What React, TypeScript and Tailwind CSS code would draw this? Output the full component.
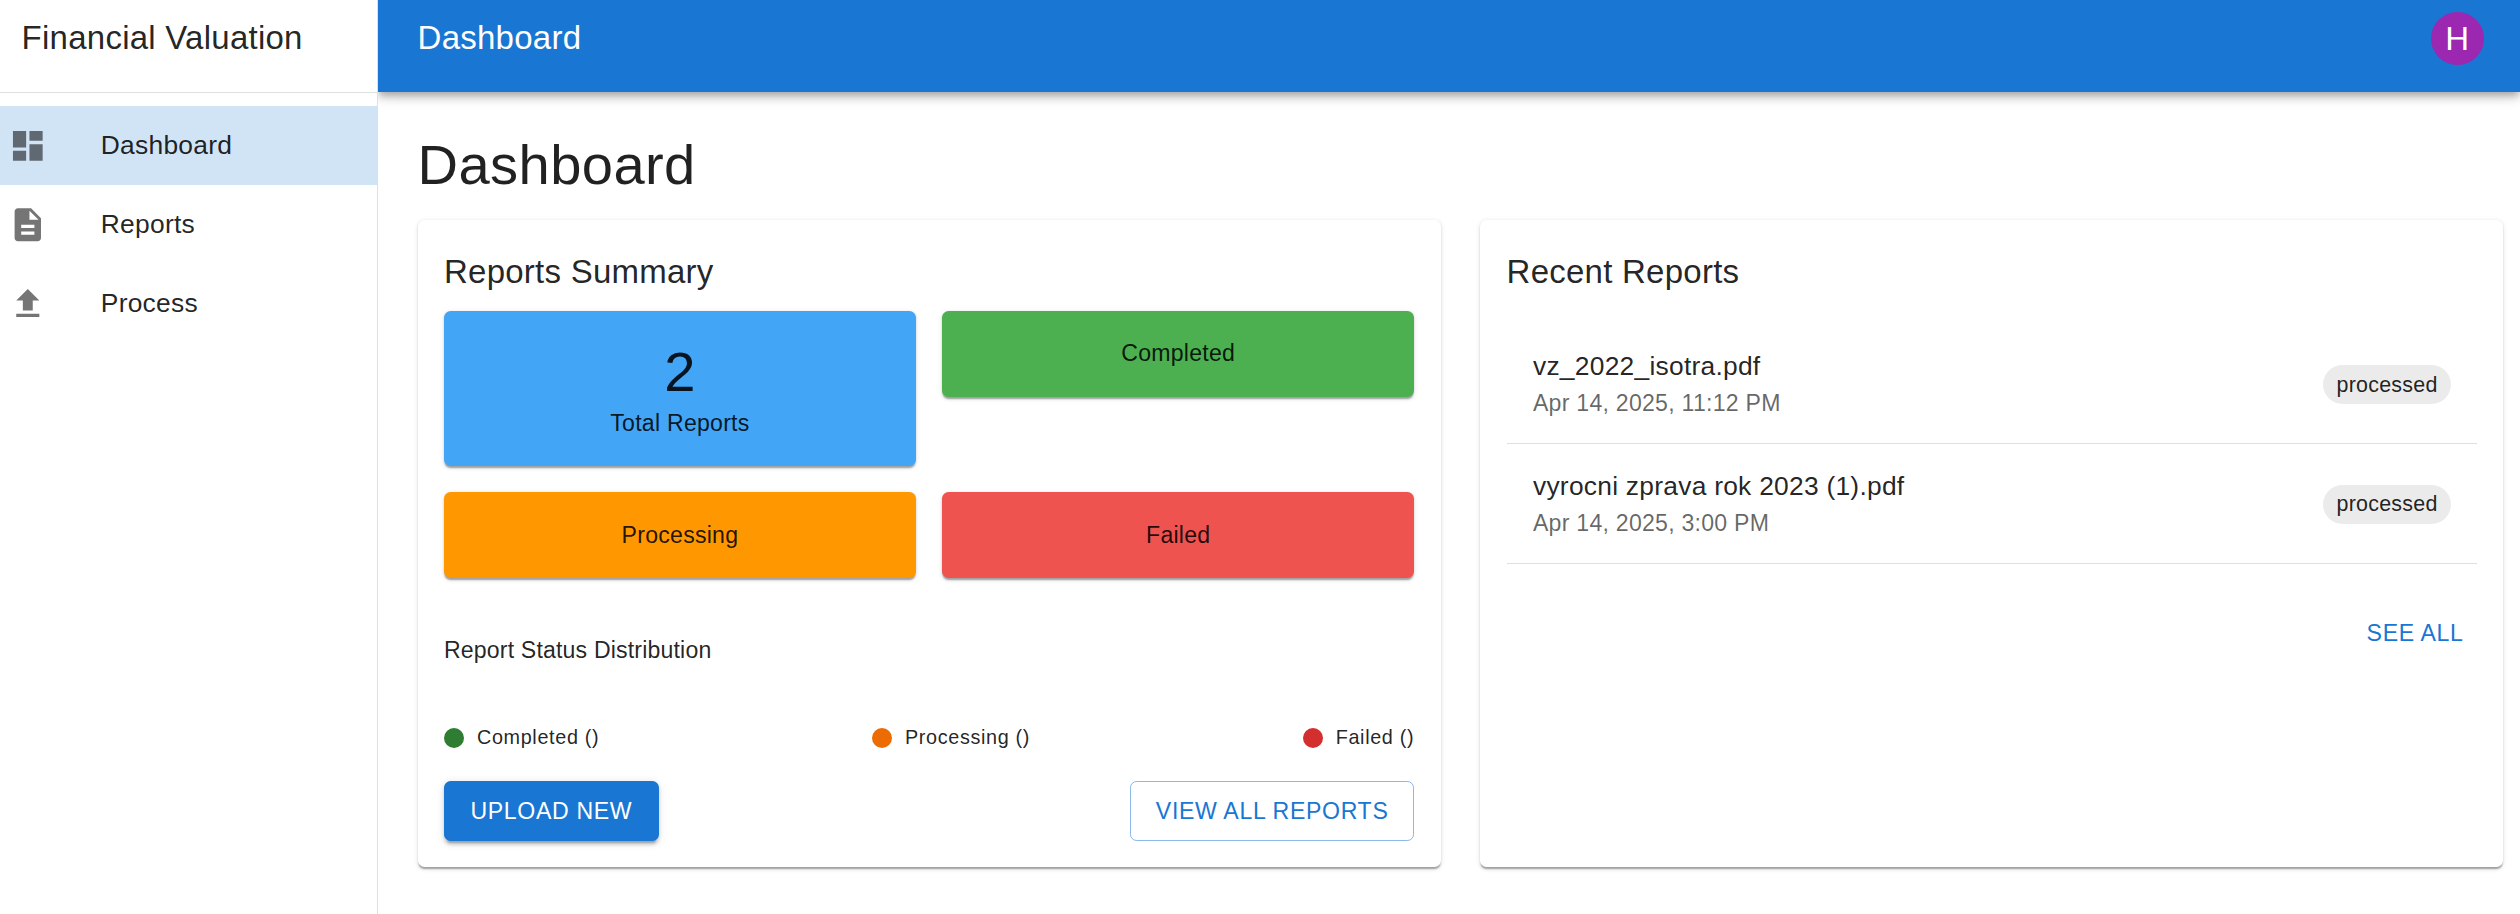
import React from "react";

type NavItem = { label: string; path: string; active?: boolean };

const NAV: NavItem[] = [
  {
    label: "Dashboard",
    path: "M3 13h8V3H3v10zm0 8h8v-6H3v6zm10 0h8V11h-8v10zm0-18v6h8V3h-8z",
    active: true,
  },
  {
    label: "Reports",
    path: "M14 2H6c-1.1 0-1.99.9-1.99 2L4 20c0 1.1.89 2 1.99 2H18c1.1 0 2-.9 2-2V8l-6-6zm2 16H8v-2h8v2zm0-4H8v-2h8v2zm-3-5V3.5L18.5 9H13z",
  },
  { label: "Process", path: "M5 20h14v-2H5v2zm0-10h4v6h6v-6h4l-7-7-7 7z" },
];

const REPORTS = [
  { name: "vz_2022_isotra.pdf", date: "Apr 14, 2025, 11:12 PM", status: "processed" },
  { name: "vyrocni zprava rok 2023 (1).pdf", date: "Apr 14, 2025, 3:00 PM", status: "processed" },
];

const LEGEND = [
  { label: "Completed ()", color: "bg-[#2e7d32]" },
  { label: "Processing ()", color: "bg-[#ed6c02]" },
  { label: "Failed ()", color: "bg-[#d32f2f]" },
];

const STATS = [
  { label: "Total Reports", value: "2", color: "bg-[#42a5f5]" },
  { label: "Completed", color: "bg-[#4caf50]" },
  { label: "Processing", color: "bg-[#ff9800]" },
  { label: "Failed", color: "bg-[#ef5350]" },
];

const H4 = "text-[56.1px] leading-[69.3px] tracking-[0.00735em]";
const H6 = "text-[33px] leading-[52.8px] tracking-[0.0075em]";
const BODY1 = "text-[26.4px] leading-[39.6px] tracking-[0.00938em]";
const BODY2 = "text-[23.1px] leading-[33px] tracking-[0.01071em]";
const SUBTITLE2 = "text-[23.1px] leading-[36.3px] tracking-[0.00714em]";
const BUTTON = "text-[23.1px] leading-[40.4px] tracking-[0.02857em] uppercase";
const PAPER =
  "rounded-[6.6px] shadow-[0_3.3px_1.65px_-1.65px_rgba(0,0,0,0.2),0_1.65px_1.65px_0_rgba(0,0,0,0.14),0_1.65px_4.95px_0_rgba(0,0,0,0.12)]";

function Sidebar() {
  return (
    <aside className="relative z-10 w-[378px] shrink-0 border-r border-[#e0e0e0] bg-white">
      <div className="h-[93px] border-b border-[#e0e0e0] pt-[11.6px] pl-[21.6px]">
        <div className={`${H6} whitespace-nowrap`}>Financial Valuation</div>
      </div>
      <nav className="pt-[13.2px]">
        {NAV.map((item) => (
          <a
            key={item.label}
            className={`flex h-[79.1px] items-center pl-[8px] ${item.active ? "bg-[rgba(25,118,210,0.2)]" : ""}`}
          >
            <span className="w-[92.8px] shrink-0 text-[rgba(0,0,0,0.54)]">
              <svg viewBox="0 0 24 24" className="size-[39.6px]" fill="currentColor">
                <path d={item.path} />
              </svg>
            </span>
            <span className={BODY1}>{item.label}</span>
          </a>
        ))}
      </nav>
    </aside>
  );
}

function TopBar() {
  return (
    <header className="flex h-[92px] items-start justify-between bg-[#1976d2] pt-[12px] pr-[36.4px] pl-[39.6px] text-white shadow-[0_3.3px_6.6px_-1.65px_rgba(0,0,0,0.2),0_6.6px_8.25px_0_rgba(0,0,0,0.14),0_1.65px_16.5px_0_rgba(0,0,0,0.12)]">
      <div className={`${H6} -mt-[0.4px]`}>Dashboard</div>
      <div className="flex size-[52.8px] items-center justify-center rounded-full bg-[#9c27b0] text-[33px] leading-none">
        H
      </div>
    </header>
  );
}

function SummaryCard() {
  return (
    <section className={`${PAPER} flex flex-col bg-white p-[26.4px] pt-[25.4px]`}>
      <h2 className={`${H6} mb-[12.5px]`}>Reports Summary</h2>
      <div className="grid grid-cols-2 items-start gap-[26.4px]">
        {STATS.map((s) => (
          <div key={s.label} className={`${PAPER} ${s.color} p-[26.4px] text-center`}>
            {s.value && <div className={H4}>{s.value}</div>}
            <div className={BODY2}>{s.label}</div>
          </div>
        ))}
      </div>
      <div className={`${SUBTITLE2} mt-[53.3px]`}>Report Status Distribution</div>
      <div className="mt-auto flex justify-between">
        {LEGEND.map((l) => (
          <div key={l.label} className="flex items-center gap-[13.2px]">
            <span className={`size-[19.8px] rounded-full ${l.color}`} />
            <span className="text-[19.8px] leading-[32.9px] tracking-[0.03333em]">{l.label}</span>
          </div>
        ))}
      </div>
      <div className="mt-[26.4px] flex justify-between">
        <button
          className={`${BUTTON} rounded-[6.6px] bg-[#1976d2] px-[26.4px] py-[9.9px] text-white shadow-[0_4.95px_1.65px_-3.3px_rgba(0,0,0,0.2),0_3.3px_3.3px_0_rgba(0,0,0,0.14),0_1.65px_8.25px_0_rgba(0,0,0,0.12)]`}
        >
          Upload New
        </button>
        <button
          className={`${BUTTON} rounded-[6.6px] border border-[rgba(25,118,210,0.5)] px-[24.75px] py-[8.9px] text-[#1976d2]`}
        >
          View All Reports
        </button>
      </div>
    </section>
  );
}

function RecentCard() {
  return (
    <section className={`${PAPER} bg-white p-[26.4px] pt-[25.4px]`}>
      <h2 className={`${H6} mb-[12.5px]`}>Recent Reports</h2>
      <ul className="py-[13.2px]">
        {REPORTS.map((r) => (
          <li
            key={r.name}
            className="flex items-center justify-between border-b border-[#e0e0e0] py-[23.1px] pr-[25.8px] pl-[26.4px]"
          >
            <div>
              <div className={BODY1}>{r.name}</div>
              <div className={`${BODY2} text-[rgba(0,0,0,0.6)]`}>{r.date}</div>
            </div>
            <span className="mt-[2px] flex h-[39.6px] items-center rounded-full bg-[rgba(0,0,0,0.08)] px-[13.4px] text-[21.45px] leading-[32px] tracking-[0.2476px]">
              {r.status}
            </span>
          </li>
        ))}
      </ul>
      <div className="mt-[26.4px] flex justify-end">
        <button className={`${BUTTON} px-[13.2px] py-[9.9px] text-[#1976d2]`}>See All</button>
      </div>
    </section>
  );
}

export default function App() {
  return (
    <div className="flex h-[914px] w-[2520px] overflow-hidden bg-white font-['Liberation_Sans',Arial,sans-serif] text-[rgba(0,0,0,0.87)]">
      <Sidebar />
      <div className="min-w-0 flex-1">
        <TopBar />
        <main className="pt-[38.4px] pr-[16.8px] pl-[39.6px]">
          <h1 className={`${H4} mb-[20.6px]`}>Dashboard</h1>
          <div className="grid h-[647px] grid-cols-2 gap-[39.6px]">
            <SummaryCard />
            <RecentCard />
          </div>
        </main>
      </div>
    </div>
  );
}
